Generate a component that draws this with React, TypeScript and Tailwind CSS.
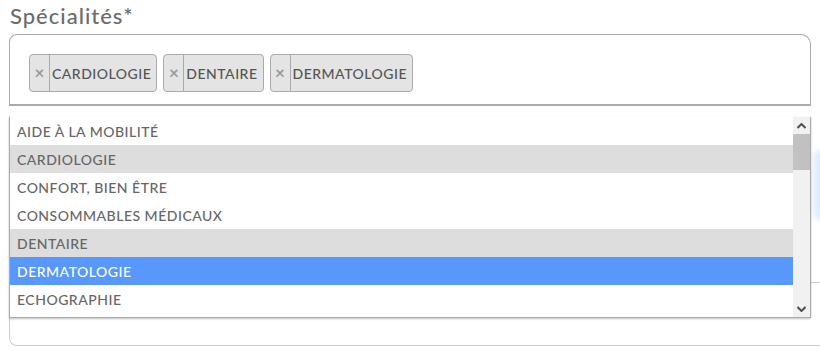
import { useState } from "react";

const options = [
  "Aide à la mobilité",
  "Cardiologie",
  "Confort, bien être",
  "Consommables médicaux",
  "Dentaire",
  "Dermatologie",
  "Echographie",
];

const font = { fontFamily: "Lato, 'Noto Sans', sans-serif" };

const Tag = ({ label }: { label: string }) => (
  <div className="flex h-[38px] items-stretch rounded-[4px] border border-[#aaa] bg-[#e4e4e4]">
    <span className="flex w-[20px] items-center justify-center border-r border-[#aaa] text-[17px] font-bold text-[#999]">
      ×
    </span>
    <span className="flex items-center pl-[2px] pr-[5px] text-[14px] font-medium uppercase tracking-[0.5px] text-[#555]">
      {label}
    </span>
  </div>
);

const App = () => {
  const [selected] = useState<string[]>(["Cardiologie", "Dentaire", "Dermatologie"]);
  const highlighted = "Dermatologie";

  return (
    <div className="relative h-[356px] w-[820px] overflow-hidden bg-white" style={font}>
      <div className="pl-[10px] pt-[1px] text-[22px] font-medium leading-[30px] tracking-[1px] text-[#6b6b6b]">
        Spécialités*
      </div>

      <div className="mx-[9px] mt-[3px] h-[72px] w-[802px] rounded-tl-[8px] rounded-tr-[10px] border border-b-2 border-[#aaa] px-[19px] pt-[19px]">
        <div className="flex gap-[6px]">
          {selected.map((s) => (
            <Tag key={s} label={s} />
          ))}
        </div>
      </div>

      {/* field underneath the open dropdown */}
      <div className="ml-[9px] mt-[10px] h-[230px] w-[830px] rounded-bl-[8px] border-b border-l border-[#ccc]" />
      <div className="absolute left-[810px] top-[282px] h-px w-[10px] bg-[#ccc]" />
      <div className="absolute left-[814px] top-[150px] h-[70px] w-[12px] rounded-full bg-[#dde9fb] blur-[3px]" />

      {/* open dropdown */}
      <div className="absolute left-[9px] top-[117px] flex h-[201px] w-[802px] border-x border-b border-[#aaa] bg-white shadow-[0_1px_2px_rgba(0,0,0,0.25)]">
        <ul className="flex-1">
          {options.map((o) => {
            const isSel = selected.includes(o);
            const isHi = o === highlighted;
            return (
              <li
                key={o}
                className={
                  "flex h-[28px] items-center pl-[7px] text-[14px] font-medium uppercase tracking-[0.5px] " +
                  (isHi
                    ? "bg-[#5897fb] text-white"
                    : isSel
                    ? "bg-[#ddd] text-[#666]"
                    : "text-[#666]")
                }
              >
                {o}
              </li>
            );
          })}
        </ul>
        <div className="flex w-[17px] flex-col bg-[#f1f1f1]">
          <div className="flex h-[17px] items-center justify-center">
            <svg width="9" height="6" viewBox="0 0 9 6">
              <path d="M0.5 5 L4.5 1 L8.5 5" fill="none" stroke="#505050" strokeWidth="2" />
            </svg>
          </div>
          <div className="h-[36px] bg-[#c1c1c1]" />
          <div className="flex-1" />
          <div className="flex h-[17px] items-center justify-center">
            <svg width="9" height="6" viewBox="0 0 9 6">
              <path d="M0.5 1 L4.5 5 L8.5 1" fill="none" stroke="#505050" strokeWidth="2" />
            </svg>
          </div>
        </div>
      </div>
    </div>
  );
};

export default App;
